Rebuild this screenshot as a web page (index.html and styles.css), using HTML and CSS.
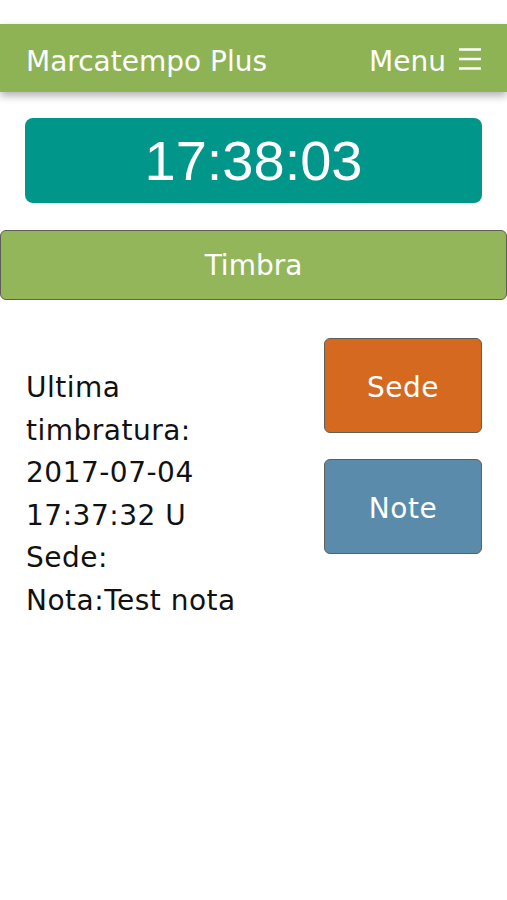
FILE: index.html
```html
<!DOCTYPE html>
<html lang="it">
<head>
    <meta charset="UTF-8">
    <meta name="viewport" content="width=device-width, initial-scale=1.0">
    <title>Marcatempo Plus</title>
    <link rel="stylesheet" href="styles.css">
</head>
<body>

    <header class="topbar">
        <div class="brand">Marcatempo Plus</div>
        <div class="menu">
            <span>Menu</span>
            <svg class="menu-icon" width="22" height="22" viewBox="0 0 22 22">
                <path d="M0 1.5H22M0 11H22M0 20.5H22" stroke="#fff" stroke-width="2.4" fill="none"/>
            </svg>
        </div>
    </header>

    <div class="clock" id="clock">17:38:03</div>

    <button class="button timbra">Timbra</button>

    <div class="details">
        <div class="last-stamp">
            <div>Ultima timbratura:</div>
            <div>2017-07-04 17:37:32 U</div>
            <div>Sede:</div>
            <div>Nota:Test nota</div>
        </div>
        <div class="actions">
            <button class="button sede">Sede</button>
            <button class="button note">Note</button>
        </div>
    </div>

</body>
</html>
```

FILE: styles.css
```css
body {
    font-family: "DejaVu Sans", Verdana, sans-serif;
    margin: 0;
    background-color: #fff;
    color: #111;
}

.topbar {
    margin-top: 24px;
    height: 68px;
    padding: 6px 26px 0 26px;
    box-sizing: border-box;
    display: flex;
    justify-content: space-between;
    align-items: center;
    background-color: #8db355;
    color: #fff;
    font-size: 28px;
    box-shadow: 0 4px 8px rgba(0, 0, 0, 0.3);
}

.menu {
    display: flex;
    align-items: center;
    gap: 13px;
}

.menu-icon {
    display: block;
    margin-bottom: 4px;
}

.clock {
    margin: 26px 25px 0 25px;
    height: 85px;
    display: flex;
    justify-content: center;
    align-items: center;
    background-color: #00968a;
    border-radius: 8px;
    color: #fff;
    font-family: "Liberation Sans", Arial, sans-serif;
    font-size: 56px;
}

.button {
    font-family: "DejaVu Sans", Verdana, sans-serif;
    font-size: 28px;
    color: #fff;
    border: 1px solid #5f5f55;
    border-radius: 6px;
    cursor: pointer;
    padding: 0;
}

.timbra {
    display: block;
    width: 100%;
    height: 70px;
    margin-top: 27px;
    background-color: #93b65a;
}

.details {
    display: grid;
    grid-template-columns: 240px 1fr;
    margin-top: 38px;
    padding: 0 25px 0 26px;
}

.last-stamp {
    padding-top: 29px;
    font-size: 28px;
    line-height: 42.6px;
    letter-spacing: 0.5px;
}

.actions {
    display: flex;
    flex-direction: column;
    align-items: flex-end;
    gap: 26px;
}

.sede,
.note {
    width: 158px;
    height: 95px;
    padding-top: 3px;
    letter-spacing: 0.5px;
}

.sede {
    background-color: #d4691f;
}

.note {
    background-color: #5b8bab;
}
```
